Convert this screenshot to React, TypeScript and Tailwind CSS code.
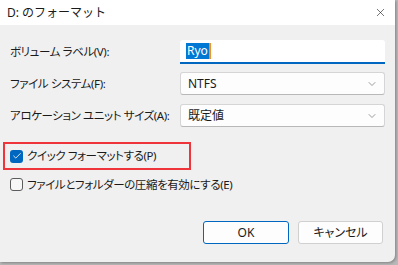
import { ChevronDown, Check, X } from 'lucide-react';

const font = { fontFamily: '"Noto Sans", "Noto Sans CJK JP", sans-serif' };

function Field({ label, children }: { label: string; children: React.ReactNode }) {
    return (
        <div className="flex items-center h-[23px]">
            <span className="w-[170px] shrink-0 whitespace-nowrap text-[11.5px] tracking-[-0.4px] text-[#1a1a1a] [font-feature-settings:'palt']">{label}</span>
            {children}
        </div>
    );
}

function Select({ value }: { value: string }) {
    return (
        <div className="w-[205px] h-[23px] bg-[#fdfdfd] border border-[#d5d5d5] border-b-[#b8b8b8] rounded-[3px] flex items-center justify-between pl-[7px] pr-[6px]">
            <span className="text-[12px] text-[#1a1a1a]">{value}</span>
            <ChevronDown size={12} strokeWidth={1.2} className="text-[#5a5a5a]" />
        </div>
    );
}

export default function App() {
    return (
        <div className="w-[398px] h-[265px] bg-[#b9b9b9] overflow-hidden" style={font}>
            <div className="w-[395px] h-[262px] bg-[#f0f0f0] rounded-br-[7px] flex flex-col shadow-[1px_1px_3px_rgba(0,0,0,0.3)]">
                {/* Title bar */}
                <div className="h-[25px] bg-white flex items-center justify-between pl-[7px] pr-[8px]">
                    <span className="text-[12px] text-[#1a1a1a]">D: のフォーマット</span>
                    <X size={13} strokeWidth={1.1} className="text-[#1a1a1a]" />
                </div>

                {/* Fields */}
                <div className="pl-[10px] pt-[15px] flex flex-col gap-[9px]">
                    <Field label="ボリューム ラベル(V):">
                        <div className="w-[205px] h-[24px] bg-white border-b-2 border-[#0067c0] rounded-t-[3px] flex items-center pl-[6px]">
                            <span className="text-[12px] bg-[#0078d4] text-white leading-[16px] px-[1px]">Ryo</span>
                            <span className="w-[2px] h-[16px] bg-[#f7901e]" />
                        </div>
                    </Field>
                    <Field label="ファイル システム(F):">
                        <Select value="NTFS" />
                    </Field>
                    <Field label="アロケーション ユニット サイズ(A):">
                        <Select value="既定値" />
                    </Field>
                </div>

                {/* Options */}
                <div className="mt-[15px] ml-[3px] w-[188px] h-[28px] border-2 border-[#f0343c] flex items-center pl-[5px] gap-[4px]">
                    <span className="w-[13px] h-[13px] shrink-0 rounded-[3px] bg-[#0067c0] flex items-center justify-center">
                        <Check size={10} strokeWidth={2} className="text-white" />
                    </span>
                    <span className="text-[11.5px] tracking-[-0.4px] whitespace-nowrap text-[#1a1a1a] [font-feature-settings:'palt']">クイック フォーマットする(P)</span>
                </div>
                <div className="mt-[6px] ml-[10px] flex items-center gap-[4px]">
                    <span className="w-[13px] h-[13px] shrink-0 rounded-[3px] border border-[#5c5c5c] bg-[#f7f7f7]" />
                    <span className="text-[11.5px] tracking-[-0.4px] whitespace-nowrap text-[#1a1a1a] [font-feature-settings:'palt']">ファイルとフォルダーの圧縮を有効にする(E)</span>
                </div>

                {/* Buttons */}
                <div className="mt-auto mb-[18px] flex justify-end gap-[9px] pr-[12px]">
                    <button className="w-[86px] h-[23px] bg-[#fdfdfd] border border-[#0067c0] rounded-[3px] text-[12px] text-[#1a1a1a]">
                        OK
                    </button>
                    <button className="w-[85px] h-[23px] bg-[#fdfdfd] border border-[#d0d0d0] rounded-[3px] text-[12px] text-[#1a1a1a] [font-feature-settings:'palt']">
                        キャンセル
                    </button>
                </div>
            </div>
        </div>
    );
}
